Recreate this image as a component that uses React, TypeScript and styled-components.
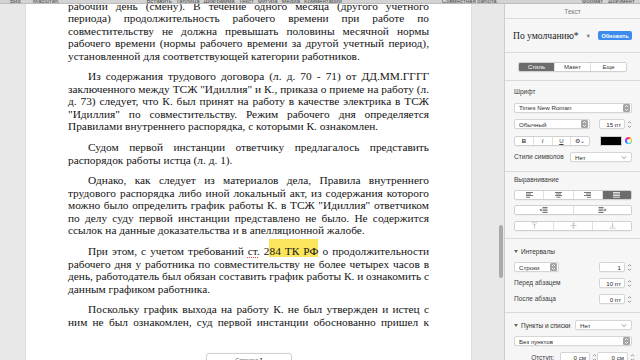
import React from 'react';
import styled, { createGlobalStyle } from 'styled-components';

const Global = createGlobalStyle`
  html, body { margin: 0; padding: 0; background: #e7e7e7; }
  body { width: 640px; height: 360px; overflow: hidden; }
  #root { width: 640px; height: 360px; }
  * { box-sizing: border-box; }
`;

const Window = styled.div`
  width: 640px;
  height: 360px;
  display: flex;
  flex-direction: column;
  overflow: hidden;
  font-family: "Liberation Sans", Arial, sans-serif;
`;

const Toolbar = styled.div`
  height: 4px;
  flex: none;
  background: #d3d3d3;
  border-bottom: 1px solid #bcbcbc;
  display: flex;
  align-items: flex-end;
  overflow: hidden;
  padding-left: 10px;
  position: relative;
  z-index: 2;
`;

const ToolItem = styled.span<{ $ml?: number }>`
  font-size: 6px;
  line-height: 6px;
  height: 6px;
  color: #4a4a4a;
  white-space: nowrap;
  margin-left: ${p => p.$ml ?? 4}px;
  margin-bottom: -1px;
`;

const Main = styled.div`
  flex: 1;
  min-height: 0;
  display: flex;
`;

const DocArea = styled.div`
  flex: 1;
  position: relative;
  overflow: hidden;
  background: #e8e8e8;
  display: flex;
  padding-left: 25px;
`;

const Page = styled.div`
  width: 447px;
  flex: none;
  background: #fff;
  padding: 0 42px;
  border-left: 1px solid #dedede;
  border-right: 1px solid #dedede;
`;

const Body = styled.div`
  margin-top: -4.25px;
  font-family: "Liberation Serif", "Times New Roman", serif;
  font-size: 11.35px;
  line-height: 12.5px;
  color: #141414;
`;

const Para = styled.p`
  margin: 0 0 8.2px;
`;

const TextLine = styled.span<{ $last?: boolean; $indent?: boolean }>`
  display: block;
  white-space: nowrap;
  text-align: ${p => (p.$last ? 'left' : 'justify')};
  text-align-last: ${p => (p.$last ? 'left' : 'justify')};
  padding-left: ${p => (p.$indent ? '20px' : '0')};
`;

const Mark = styled.span`
  background: #fbe55c;
  padding-top: 6px;
`;

const Spell = styled.span`
  text-decoration: underline dotted #e0443a;
  text-underline-offset: 2px;
`;

const ScrollThumb = styled.div`
  position: absolute;
  right: 1px;
  top: 221px;
  width: 4px;
  height: 53px;
  border-radius: 2px;
  background: #a9a9a9;
`;

const PageBadge = styled.div`
  position: absolute;
  left: 206px;
  top: 349px;
  width: 86px;
  height: 16px;
  background: #fff;
  border: 1px solid #d2d2d2;
  border-radius: 3px;
  box-shadow: 0 0 2px rgba(0, 0, 0, 0.08);
  font-size: 5px;
  color: #555;
  text-align: center;
  padding-top: 3px;
  b { color: #222; }
`;

/* ---------- Sidebar ---------- */

const Sidebar = styled.aside`
  width: 136px;
  flex: none;
  border-left: 1px solid #cdcdcd;
  background: #f6f6f6;
  display: flex;
  flex-direction: column;
  color: #333;
  font-size: 6.5px;
`;

const SideHeader = styled.div`
  height: 15px;
  flex: none;
  border-bottom: 1px solid #dadada;
  display: flex;
  align-items: center;
  justify-content: center;
  color: #7a7a7a;
  font-size: 6.5px;
`;

const Section = styled.div<{ $pt: number; $pb: number; $gap: number }>`
  flex: none;
  display: flex;
  flex-direction: column;
  gap: ${p => p.$gap}px;
  padding: ${p => p.$pt}px 8px ${p => p.$pb}px 9px;
  border-bottom: 1px solid #dadada;
`;

const StyleRow = styled.div`
  height: 34px;
  flex: none;
  border-bottom: 1px solid #dadada;
  display: flex;
  align-items: center;
  padding: 0 8px 0 8px;
`;

const StyleName = styled.span`
  font-family: "Liberation Serif", "Times New Roman", serif;
  font-size: 9.6px;
  color: #1c1c1c;
  flex: 1;
`;

const Caret = styled.span`
  font-size: 5.5px;
  color: #777;
  margin-right: 7px;
`;

const UpdateButton = styled.div`
  width: 34px;
  height: 9px;
  border-radius: 2px;
  background: #3d8ced;
  color: #fff;
  font-size: 5.5px;
  font-weight: bold;
  display: flex;
  align-items: center;
  justify-content: center;
`;

const TabsWrap = styled.div`
  height: 28px;
  flex: none;
  border-bottom: 1px solid #dadada;
  display: flex;
  align-items: center;
  justify-content: center;
`;

const SegGroup = styled.div<{ $w: number }>`
  width: ${p => p.$w}px;
  height: 10px;
  flex: none;
  display: flex;
  border: 1px solid #d0d0d0;
  border-radius: 2px;
  background: #fff;
  overflow: hidden;
  box-shadow: 0 0.5px 0 rgba(0, 0, 0, 0.06);
`;

const Seg = styled.div<{ $active?: boolean; $dim?: boolean }>`
  flex: 1;
  display: flex;
  align-items: center;
  justify-content: center;
  font-size: 6px;
  color: ${p => (p.$active ? '#fff' : p.$dim ? '#b0b0b0' : '#3a3a3a')};
  background: ${p => (p.$active ? '#6c6c6c' : '#fff')};
  & + & { border-left: 1px solid #e0e0e0; }
`;

const Label = styled.div`
  height: 8px;
  line-height: 8px;
  font-size: 6.5px;
  color: #3c3c3c;
  white-space: nowrap;
`;

const Row = styled.div<{ $h?: number }>`
  height: ${p => p.$h ?? 10}px;
  flex: none;
  display: flex;
  align-items: center;
  justify-content: space-between;
`;

const Box = styled.div<{ $w?: number; $right?: boolean }>`
  ${p => (p.$w ? `width: ${p.$w}px;` : 'flex: 1;')}
  height: 10px;
  background: #fff;
  border: 1px solid #d5d5d5;
  border-radius: 2px;
  box-shadow: 0 0.5px 0 rgba(0, 0, 0, 0.05);
  display: flex;
  align-items: center;
  justify-content: ${p => (p.$right ? 'flex-end' : 'space-between')};
  padding: 0 1px 0 4px;
  font-size: 6.2px;
  color: #2e2e2e;
  white-space: nowrap;
`;

const NumBox = styled(Box)`
  padding: 0 3px 0 2px;
`;

const Group = styled.div<{ $gap?: number }>`
  display: flex;
  align-items: center;
  gap: ${p => p.$gap ?? 2}px;
`;

const Disclosure = styled.div`
  display: flex;
  align-items: center;
  gap: 3px;
  font-size: 6.5px;
  color: #333;
  height: 10px;
  flex: none;
  &::before {
    content: '';
    border-left: 2px solid transparent;
    border-right: 2px solid transparent;
    border-top: 3px solid #666;
  }
`;

const ColorWell = styled.div`
  width: 22px;
  height: 10px;
  background: #000;
  border: 1px solid #cfcfcf;
  border-radius: 1px;
`;

const ColorWheel = styled.div`
  width: 7px;
  height: 7px;
  border-radius: 50%;
  background: conic-gradient(#f33, #fc3, #6d3, #3cf, #36f, #c3f, #f33);
  position: relative;
  &::after {
    content: '';
    position: absolute;
    inset: 1.5px;
    border-radius: 50%;
    background: #f6f6f6;
  }
`;

const IndentLabel = styled.span`
  width: 40px;
  text-align: right;
  margin-right: 4px;
  font-size: 6.5px;
  color: #3c3c3c;
`;

/* ---------- icons ---------- */

const PopupArrows = () => (
  <svg width="7" height="8" viewBox="0 0 7 8">
    <rect x="0" y="0" width="7" height="8" rx="1.5" fill="#a3a3a3" />
    <path d="M2 3 L3.5 1.6 L5 3 M2 5 L3.5 6.4 L5 5" stroke="#fff" strokeWidth="0.8" fill="none" />
  </svg>
);

const Stepper = () => (
  <svg width="5" height="9" viewBox="0 0 5 9">
    <path d="M1 3.2 L2.5 1.6 L4 3.2 M1 5.8 L2.5 7.4 L4 5.8" stroke="#7d7d7d" strokeWidth="0.8" fill="none" />
  </svg>
);

const Chevron = () => (
  <svg width="6" height="5" viewBox="0 0 6 5" style={{ marginRight: 3 }}>
    <path d="M1 1.5 L3 3.5 L5 1.5" stroke="#6f6f6f" strokeWidth="0.8" fill="none" />
  </svg>
);

type Align = 'left' | 'center' | 'right' | 'justify';
const AlignIcon = ({ kind, color }: { kind: Align; color: string }) => {
  const widths = kind === 'justify' ? [7, 7, 7, 7] : [7, 5, 7, 4];
  return (
    <svg width="7" height="6" viewBox="0 0 7 6">
      {widths.map((w, i) => {
        const x = kind === 'left' || kind === 'justify' ? 0 : kind === 'right' ? 7 - w : (7 - w) / 2;
        return <rect key={i} x={x} y={i * 1.6} width={w} height="0.8" fill={color} />;
      })}
    </svg>
  );
};

const IndentIcon = ({ dir }: { dir: 'out' | 'in' }) => (
  <svg width="9" height="6" viewBox="0 0 9 6">
    {dir === 'out' ? (
      <>
        <path d="M2.5 1.5 L0.5 3 L2.5 4.5 Z" fill="#555" />
        <rect x="3.5" y="0" width="5" height="0.8" fill="#555" />
        <rect x="3.5" y="1.7" width="5" height="0.8" fill="#555" />
        <rect x="3.5" y="3.4" width="5" height="0.8" fill="#555" />
        <rect x="3.5" y="5.1" width="5" height="0.8" fill="#555" />
      </>
    ) : (
      <>
        <rect x="0.5" y="0" width="5" height="0.8" fill="#555" />
        <rect x="0.5" y="1.7" width="5" height="0.8" fill="#555" />
        <rect x="0.5" y="3.4" width="5" height="0.8" fill="#555" />
        <rect x="0.5" y="5.1" width="5" height="0.8" fill="#555" />
        <path d="M6.5 1.5 L8.5 3 L6.5 4.5 Z" fill="#555" />
      </>
    )}
  </svg>
);

const VAlignIcon = ({ kind }: { kind: 'top' | 'middle' | 'bottom' }) => (
  <svg width="7" height="7" viewBox="0 0 7 7">
    {kind === 'top' && (
      <>
        <rect x="0.5" y="0.5" width="6" height="0.7" fill="#b4b4b4" />
        <path d="M3.5 6.5 L3.5 2 M2 3.5 L3.5 2 L5 3.5" stroke="#b4b4b4" strokeWidth="0.7" fill="none" />
      </>
    )}
    {kind === 'middle' && (
      <>
        <rect x="0.5" y="3.2" width="6" height="0.7" fill="#b4b4b4" />
        <path d="M3.5 0.3 L3.5 2.6 M2.3 1.5 L3.5 2.6 L4.7 1.5 M3.5 6.7 L3.5 4.5 M2.3 5.6 L3.5 4.5 L4.7 5.6" stroke="#b4b4b4" strokeWidth="0.7" fill="none" />
      </>
    )}
    {kind === 'bottom' && (
      <>
        <rect x="0.5" y="5.8" width="6" height="0.7" fill="#b4b4b4" />
        <path d="M3.5 0.5 L3.5 5 M2 3.5 L3.5 5 L5 3.5" stroke="#b4b4b4" strokeWidth="0.7" fill="none" />
      </>
    )}
  </svg>
);

/* ---------- document text ---------- */

type ParaData = { indent: boolean; lines: React.ReactNode[] };

const paragraphs: ParaData[] = [
  {
    indent: false,
    lines: [
      'рабочий день (смену). В течение одного месяца (другого учетного',
      'периода) продолжительность рабочего времени при работе по',
      'совместительству не должна превышать половины месячной нормы',
      'рабочего времени (нормы рабочего времени за другой учетный период),',
      'установленной для соответствующей категории работников.',
    ],
  },
  {
    indent: true,
    lines: [
      'Из содержания трудового договора (л. д. 70 - 71) от ДД.ММ.ГГГГ',
      'заключенного между ТСЖ "Идиллия" и К., приказа о приеме на работу (л.',
      'д. 73) следует, что К. был принят на работу в качестве электрика в ТСЖ',
      '"Идиллия" по совместительству. Режим рабочего дня определяется',
      'Правилами внутреннего распорядка, с которыми К. ознакомлен.',
    ],
  },
  {
    indent: true,
    lines: [
      'Судом первой инстанции ответчику предлагалось представить',
      'распорядок работы истца (л. д. 1).',
    ],
  },
  {
    indent: true,
    lines: [
      'Однако, как следует из материалов дела, Правила внутреннего',
      'трудового распорядка либо иной локальный акт, из содержания которого',
      'можно было определить график работы К. в ТСЖ "Идиллия" ответчиком',
      'по делу суду первой инстанции представлено не было. Не содержится',
      'ссылок на данные доказательства и в апелляционной жалобе.',
    ],
  },
  {
    indent: true,
    lines: [
      <>
        При этом, с учетом требований <Spell>ст.</Spell> 2<Mark>84 ТК РФ</Mark> о продолжительности
      </>,
      'рабочего дня у работника по совместительству не более четырех часов в',
      'день, работодатель был обязан составить график работы К. и ознакомить с',
      'данным графиком работника.',
    ],
  },
  {
    indent: true,
    lines: [
      'Поскольку график выхода на работу К. не был утвержден и истец с',
      'ним не был ознакомлен, суд первой инстанции обоснованно пришел к',
    ],
  },
];

const endsOnPage = (pi: number) => pi < paragraphs.length - 1;

export default function App() {
  return (
    <>
      <Global />
      <Window>
        <Toolbar>
          <ToolItem $ml={0}>Вид</ToolItem>
          <ToolItem $ml={12}>Масштаб</ToolItem>
          <ToolItem $ml={88}>Вставить</ToolItem>
          <ToolItem>Таблица</ToolItem>
          <ToolItem>Диаграмма</ToolItem>
          <ToolItem>Текст</ToolItem>
          <ToolItem>Фигура</ToolItem>
          <ToolItem>Медиа</ToolItem>
          <ToolItem>Комментарий</ToolItem>
          <ToolItem $ml={100}>Совместная работа</ToolItem>
          <ToolItem $ml={85}>Формат</ToolItem>
          <ToolItem $ml={5}>Документ</ToolItem>
        </Toolbar>
        <Main>
          <DocArea>
            <Page>
              <Body>
                {paragraphs.map((p, pi) => (
                  <Para key={pi}>
                    {p.lines.map((l, li) => (
                      <TextLine
                        key={li}
                        $indent={p.indent && li === 0}
                        $last={li === p.lines.length - 1 && endsOnPage(pi)}
                      >
                        {l}
                      </TextLine>
                    ))}
                  </Para>
                ))}
              </Body>
            </Page>
            <ScrollThumb />
            <PageBadge>
              Страница <b>1</b>
            </PageBadge>
          </DocArea>

          <Sidebar>
            <SideHeader>Текст</SideHeader>
            <StyleRow>
              <StyleName>По умолчанию*</StyleName>
              <Caret>▼</Caret>
              <UpdateButton>Обновить</UpdateButton>
            </StyleRow>
            <TabsWrap>
              <SegGroup $w={109}>
                <Seg $active>Стиль</Seg>
                <Seg>Макет</Seg>
                <Seg>Еще</Seg>
              </SegGroup>
            </TabsWrap>

            <Section $pt={7} $pb={9} $gap={6.5}>
              <Label>Шрифт</Label>
              <Row>
                <Box>
                  Times New Roman
                  <PopupArrows />
                </Box>
              </Row>
              <Row>
                <Box $w={76}>
                  Обычный
                  <PopupArrows />
                </Box>
                <Group $gap={2}>
                  <NumBox $w={26} $right>
                    15 пт
                  </NumBox>
                  <Stepper />
                </Group>
              </Row>
              <Row>
                <SegGroup $w={76}>
                  <Seg>
                    <b>B</b>
                  </Seg>
                  <Seg>
                    <i>I</i>
                  </Seg>
                  <Seg>
                    <u>U</u>
                  </Seg>
                  <Seg>⚙⌄</Seg>
                </SegGroup>
                <Group $gap={3}>
                  <ColorWell />
                  <ColorWheel />
                </Group>
              </Row>
              <Row>
                <Label>Стили символов</Label>
                <Box $w={62}>
                  Нет
                  <Chevron />
                </Box>
              </Row>
            </Section>

            <Section $pt={4} $pb={7.5} $gap={5.5}>
              <Label>Выравнивание</Label>
              <SegGroup $w={118}>
                <Seg>
                  <AlignIcon kind="left" color="#555" />
                </Seg>
                <Seg>
                  <AlignIcon kind="center" color="#555" />
                </Seg>
                <Seg>
                  <AlignIcon kind="right" color="#555" />
                </Seg>
                <Seg $active>
                  <AlignIcon kind="justify" color="#fff" />
                </Seg>
              </SegGroup>
              <SegGroup $w={118}>
                <Seg>
                  <IndentIcon dir="out" />
                </Seg>
                <Seg>
                  <IndentIcon dir="in" />
                </Seg>
              </SegGroup>
              <SegGroup $w={118}>
                <Seg $dim>
                  <VAlignIcon kind="top" />
                </Seg>
                <Seg $dim>
                  <VAlignIcon kind="middle" />
                </Seg>
                <Seg $dim>
                  <VAlignIcon kind="bottom" />
                </Seg>
              </SegGroup>
            </Section>

            <Section $pt={7} $pb={8} $gap={6}>
              <Disclosure>Интервалы</Disclosure>
              <Row>
                <Box $w={45}>
                  Строки
                  <PopupArrows />
                </Box>
                <Group $gap={2}>
                  <NumBox $w={26} $right>
                    1
                  </NumBox>
                  <Stepper />
                </Group>
              </Row>
              <Row>
                <Label>Перед абзацем</Label>
                <Group $gap={2}>
                  <NumBox $w={26} $right>
                    10 пт
                  </NumBox>
                  <Stepper />
                </Group>
              </Row>
              <Row>
                <Label>После абзаца</Label>
                <Group $gap={2}>
                  <NumBox $w={26} $right>
                    0 пт
                  </NumBox>
                  <Stepper />
                </Group>
              </Row>
            </Section>

            <Section $pt={7} $pb={0} $gap={6}>
              <Row>
                <Disclosure>Пункты и списки</Disclosure>
                <Box $w={57}>
                  Нет
                  <Chevron />
                </Box>
              </Row>
              <Row>
                <Box>
                  Без пунктов
                  <PopupArrows />
                </Box>
              </Row>
              <Row>
                <Group $gap={2}>
                  <IndentLabel>Отступ:</IndentLabel>
                  <NumBox $w={30} $right>
                    0 см
                  </NumBox>
                  <Stepper />
                </Group>
                <Group $gap={2}>
                  <NumBox $w={31} $right>
                    0 см
                  </NumBox>
                  <Stepper />
                </Group>
              </Row>
            </Section>
          </Sidebar>
        </Main>
      </Window>
    </>
  );
}
